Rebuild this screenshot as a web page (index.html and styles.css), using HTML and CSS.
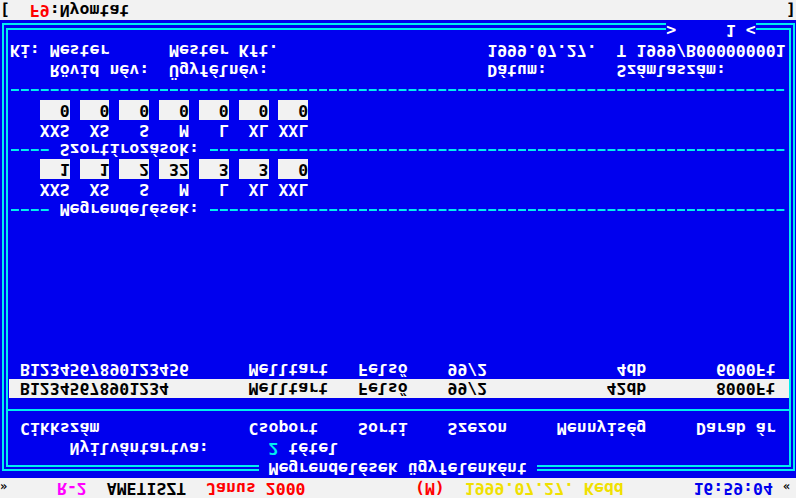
FILE: index.html
```html
<!DOCTYPE html>
<html lang="hu">
<head>
<meta charset="utf-8">
<title>Megrendelések ügyfelenként</title>
<link rel="stylesheet" href="styles.css">
</head>
<body>
<div class="screen">
<div class="ln bar"><span class="dim">»</span>     <span class="mag">R-2</span>  AMETISZT  <span class="red">Janus 2000</span>           <span class="red">(M)</span>  <span class="yel">1999.07.27. Kedd</span>       <span class="blu">16:59:04</span> <span class="dim">«</span></div>
<div class="main">
<div class="frame"><div class="frame-in"></div></div>
<div class="ln">                          <span class="gap"> Megrendelések ügyfelenként </span></div>
<div class="ln">       Nyilvántartva:      <span class="cyan">2</span> tétel</div>
<div class="ln">  Cikkszám               Csoport    Sorti    Szezon     Mennyiség     Darab ár</div>
<div class="ln sep"></div>
<div class="ln sel">B12345678901234        Melltart   Felső    99/2            42db       8000Ft</div>
<div class="ln">  B1234567890123456      Melltart   Felső    99/2             4db       6000Ft</div>
<div class="blank"></div>
<div class="ln"> <span class="dash w4"></span> Megrendelések: <span class="dash w58"></span></div>
<div class="ln">    XXS  XS   S   M   L  XL XXL</div>
<div class="ln">    <span class="cell">1</span> <span class="cell">1</span> <span class="cell">2</span> <span class="cell">32</span> <span class="cell">3</span> <span class="cell">3</span> <span class="cell">0</span></div>
<div class="ln"> <span class="dash w4"></span> Szortírozások: <span class="dash w58"></span></div>
<div class="ln">    XXS  XS   S   M   L  XL XXL</div>
<div class="ln">    <span class="cell">0</span> <span class="cell">0</span> <span class="cell">0</span> <span class="cell">0</span> <span class="cell">0</span> <span class="cell">0</span> <span class="cell">0</span></div>
<div class="ln"> <span class="dash w78"></span></div>
<div class="ln">     Rövid név:  Ügyfélnév:                      Dátum:       Számlaszám:</div>
<div class="ln"> Ki: Mester      Mester Kft.                     1999.07.27.  T 1999/B000000001</div>
<div class="ln">                                                                   <span class="gap">&gt;     1 &lt;</span></div>
</div>
<div class="ln bar bottom"><span>[  <span class="red">F9</span>:Nyomtat</span><span>]</span></div>
</div>
</body>
</html>
```

FILE: styles.css
```css
html, body {
  margin: 0;
  padding: 0;
  background: #0000ee;
}

.screen {
  width: 796px;
  height: 498px;
  overflow: hidden;
  transform: scaleY(-1);
  background: #0000ee;
  color: #ffffff;
  font-family: "DejaVu Sans Mono", "Liberation Mono", monospace;
  font-weight: bold;
  font-size: 16.53px;
  line-height: 19.92px;
}

.ln {
  height: 19.92px;
  box-sizing: border-box;
  white-space: pre;
  position: relative;
  z-index: 1;
}

.bar {
  background: #f2f2f2;
  color: #000000;
}

.bottom {
  display: flex;
  justify-content: space-between;
}

.main {
  position: relative;
  height: 458.16px;
}

.frame {
  position: absolute;
  left: 2px;
  right: 1px;
  top: 7.08px;
  bottom: 2.6px;
  border: 2px solid #00eeee;
  z-index: 0;
}

.frame-in {
  position: absolute;
  left: 2px;
  right: 2px;
  top: 2px;
  bottom: 3.5px;
  border: 2px solid #00eeee;
}

.gap {
  display: inline-block;
  background: #0000ee;
}

.sep {
  padding-top: 7.4px;
}

.sep::before {
  content: "";
  display: block;
  height: 2px;
  margin: 0 6px 0 8px;
  background: #00eeee;
}

.sel {
  margin: 0 7px 0 9px;
  padding-left: calc(2ch - 9px);
  background: #f2f2f2;
  color: #000000;
}

.blank {
  height: 139.44px;
}

.dash {
  display: inline-block;
  vertical-align: top;
  height: 2px;
  margin-top: 8.6px;
  background: linear-gradient(to right, transparent 1.2px, #00eeee 1.2px, #00eeee 8.5px, transparent 8.5px) 0 0 / 1ch 2px repeat-x;
}

.w4 { width: 4ch; }
.w58 { width: 58ch; }
.w78 { width: 78ch; }

.cell {
  display: inline-block;
  vertical-align: top;
  width: 3ch;
  height: 19.92px;
  text-align: right;
  background: #f2f2f2;
  color: #000000;
}

.cyan { color: #00eeee; }
.red { color: #ff0000; }
.mag { color: #ff00ff; }
.yel { color: #f0e000; }
.blu { color: #0000ee; }
.dim { color: #000000; font-size: 12px; }
```
